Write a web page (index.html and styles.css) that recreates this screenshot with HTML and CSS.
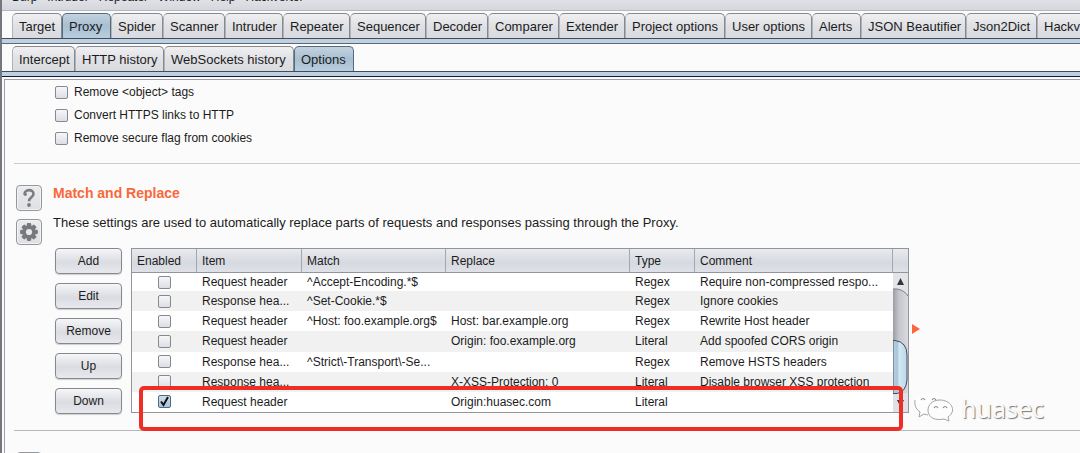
FILE: index.html
```html
<!DOCTYPE html>
<html lang="en">
<head>
<meta charset="utf-8">
<title>Proxy options</title>
<link rel="stylesheet" href="styles.css">
</head>
<body>
<div class="window">
  <nav class="menubar"><span>Burp</span><span>Intruder</span><span>Repeater</span><span>Window</span><span>Help</span><span>Hackvertor</span></nav>
  <div class="tabs tabs-main">
    <button class="tab">Target</button><button class="tab active">Proxy</button><button class="tab">Spider</button><button class="tab">Scanner</button><button class="tab">Intruder</button><button class="tab">Repeater</button><button class="tab">Sequencer</button><button class="tab">Decoder</button><button class="tab">Comparer</button><button class="tab">Extender</button><button class="tab">Project options</button><button class="tab">User options</button><button class="tab">Alerts</button><button class="tab">JSON Beautifier</button><button class="tab">Json2Dict</button><button class="tab">Hackvertor</button>
  </div>
  <div class="tabs tabs-sub">
    <button class="tab">Intercept</button><button class="tab">HTTP history</button><button class="tab">WebSockets history</button><button class="tab active">Options</button>
  </div>
  <main class="panel">
    <div class="checks">
      <label class="check"><input type="checkbox">Remove &lt;object&gt; tags</label>
      <label class="check"><input type="checkbox">Convert HTTPS links to HTTP</label>
      <label class="check"><input type="checkbox">Remove secure flag from cookies</label>
    </div>
    <section class="section">
      <div class="tools">
        <button class="tool" aria-label="Help"><svg width="18" height="20" viewBox="0 0 18 20"><path d="M4.5 6.5C4.5 0.8 13.5 0.8 13.5 6C13.5 9.2 9 9.4 9 13.2" fill="none" stroke="#7b7d80" stroke-width="2.6"/><circle cx="5.3" cy="6.3" r="1.6" fill="#7b7d80"/><circle cx="9" cy="17" r="1.9" fill="#7b7d80"/></svg></button>
        <button class="tool" aria-label="Settings"><svg width="20" height="20" viewBox="-9 -9 18 18"><g fill="#77797c"><rect x="-2" y="-8" width="4" height="16" rx="1"/><rect x="-2" y="-8" width="4" height="16" rx="1" transform="rotate(45)"/><rect x="-2" y="-8" width="4" height="16" rx="1" transform="rotate(90)"/><rect x="-2" y="-8" width="4" height="16" rx="1" transform="rotate(135)"/><circle r="6"/></g><circle r="2.8" fill="#e6e7e9"/></svg></button>
      </div>
      <div class="content">
        <h2>Match and Replace</h2>
        <p>These settings are used to automatically replace parts of requests and responses passing through the Proxy.</p>
        <div class="editor">
          <div class="actions">
            <button>Add</button><button>Edit</button><button>Remove</button><button>Up</button><button>Down</button>
          </div>
          <div class="rules">
            <table>
              <colgroup><col class="c-enabled"><col class="c-item"><col class="c-match"><col class="c-replace"><col class="c-type"><col class="c-comment"><col class="c-scroll"></colgroup>
              <thead><tr><th>Enabled</th><th>Item</th><th>Match</th><th>Replace</th><th>Type</th><th>Comment</th><th></th></tr></thead>
              <tbody>
                <tr><td><input type="checkbox" aria-label="Enabled"></td><td>Request header</td><td>^Accept-Encoding.*$</td><td></td><td>Regex</td><td>Require non-compressed respo...</td>
                  <td class="scroll" rowspan="7"><svg width="15" height="139" viewBox="0 0 15 139">
                    <defs>
                      <linearGradient id="track"><stop offset="0" stop-color="#9b9da3"/><stop offset=".4" stop-color="#c5c7cc"/><stop offset="1" stop-color="#d9dadf"/></linearGradient>
                      <linearGradient id="thumb"><stop offset="0" stop-color="#b8cfdf"/><stop offset=".3" stop-color="#a9c5d9"/><stop offset=".45" stop-color="#d3e7f3"/><stop offset="1" stop-color="#bdd7e8"/></linearGradient>
                    </defs>
                    <rect width="15" height="139" fill="url(#track)"/>
                    <path d="M0 0H15V23Q12 16 4 16H0Z" fill="#e3e4e8"/><path d="M0 16H4Q11 17 15 23" fill="none" stroke="#7e838b"/>
                    <path d="M7.5 5L11 12H4Z" fill="#33383f"/>
                    <path d="M0 120H15V139H0Z" fill="#e0e1e6"/>
                    <path d="M0 67.5H2Q14 69 14 82V107Q13 119 4 120.5H0Z" fill="url(#thumb)" stroke="#3d4f60"/>
                    <path d="M7.5 134L11 127H4Z" fill="#33383f"/>
                  </svg></td></tr>
                <tr><td><input type="checkbox" aria-label="Enabled"></td><td>Response hea...</td><td>^Set-Cookie.*$</td><td></td><td>Regex</td><td>Ignore cookies</td></tr>
                <tr><td><input type="checkbox" aria-label="Enabled"></td><td>Request header</td><td>^Host: foo.example.org$</td><td>Host: bar.example.org</td><td>Regex</td><td>Rewrite Host header</td></tr>
                <tr><td><input type="checkbox" aria-label="Enabled"></td><td>Request header</td><td></td><td>Origin: foo.example.org</td><td>Literal</td><td>Add spoofed CORS origin</td></tr>
                <tr><td><input type="checkbox" aria-label="Enabled"></td><td>Response hea...</td><td>^Strict\-Transport\-Se...</td><td></td><td>Regex</td><td>Remove HSTS headers</td></tr>
                <tr><td><input type="checkbox" aria-label="Enabled"></td><td>Response hea...</td><td></td><td>X-XSS-Protection: 0</td><td>Literal</td><td>Disable browser XSS protection</td></tr>
                <tr><td><input type="checkbox" aria-label="Enabled" checked></td><td>Request header</td><td></td><td>Origin:huasec.com</td><td>Literal</td><td></td></tr>
              </tbody>
            </table>
            <div class="highlight"></div>
          </div>
          <svg class="expander" width="8" height="10" viewBox="0 0 8 10"><path d="M0 0L8 5L0 10Z" fill="#f9683a"/></svg>
        </div>
      </div>
    </section>
    <section class="section next">
      <div class="tools"><button class="tool" aria-label="Help"></button></div>
    </section>
  </main>
</div>
<div class="watermark">
  <svg width="40" height="32" viewBox="0 0 40 32"><g fill="#fdfdfd" stroke="#a3a3a3"><path d="M15 1C6 1 1 6 1 12C1 16 3 18 6 20L5 25L10 22Q14 23 17 22C30 21 29 1 15 1Z" stroke="none"/><path d="M1 8C0 14 3 18 6 20L5 25L10 22L14 23" fill="none"/><path d="M26 8C18 8 14 13 14 18C14 25 20 29 30 27L35 29L34 25C44 18 36 8 26 8Z"/></g><g fill="none" stroke="#888" stroke-width="1.2"><path d="M7 8Q9 5 11 8M18 8Q20 5 22 8M20 16Q22 13 24 16M29 16Q31 13 33 16"/></g></svg>
  <span>huasec</span>
</div>
</body>
</html>
```
FILE: styles.css
```css
* { box-sizing: border-box; }
body {
  margin: 0;
  height: 100vh;
  overflow: hidden;
  position: relative;
  background: #fbfbfb;
  color: #1c1c1c;
  font: 12px/20px "Liberation Sans", Arial, sans-serif;
}
button, input { font: inherit; color: inherit; margin: 0; padding: 0; }
.window { height: 100%; border-left: 2px solid #74777d; overflow: hidden; }
.menubar {
  display: flex;
  gap: 10px;
  height: 11px;
  padding-left: 10px;
  align-items: flex-end;
  overflow: hidden;
  line-height: 18px;
  background: linear-gradient(#dfe1e6, #d5d7de);
  border-bottom: 1px solid #b4b7bf;
}
.menubar span { margin-bottom: 4px; }
.tabs {
  display: grid;
  padding-left: 10px;
  background: #fbfbfb;
}
.tabs-main {
  grid-template-columns: 50px 49px 52px 62px 58px 67px 76px 62px 71px 66px 100px 87px 49px 105px 71px 90px;
  padding-top: 2px;
  border-bottom: 1px solid #5a6880;
}
.tabs-sub {
  grid-template-columns: 63px 89px 130px 60px;
  padding-top: 2px;
  border-bottom: 1px solid #101d33;
}
.tabs::after {
  content: "";
  grid-column: 1 / -1;
  height: 4px;
  margin: 0 -1000px 0 -10px;
  background: #c1d0de;
  border-top: 1px solid #3f4e5c;
}
.tab {
  height: 25px;
  padding: 1px 0 0 6px;
  font-size: 13px;
  line-height: 24px;
  text-align: left;
  white-space: nowrap;
  border: 1px solid #85898f;
  border-bottom: 0;
  border-left-color: #b0b3b8;
  border-radius: 5px 5px 0 0;
  background: linear-gradient(#f0f0f2, #e0e1e5 50%, #dadbe0);
}
.tab.active {
  background: linear-gradient(#c3d2df, #a8bfd2 50%, #b9cddd);
  border-color: #56697d;
}
.panel {
  margin: 2px 0 0 2px;
  border: 1px solid #9c9ea8;
  border-right: 0;
  padding: 2px 0 0 9px;
}
.checks {
  display: flex;
  flex-direction: column;
  gap: 3px;
  padding: 0 0 15px 41px;
  border-bottom: 1px solid #cbcccd;
}
.check { display: flex; align-items: center; gap: 6px; }
input[type="checkbox"] {
  appearance: none;
  width: 13px;
  height: 13px;
  border: 1px solid #868990;
  border-radius: 2px;
  background: linear-gradient(#f7f7f9, #dcdee4);
}
input[type="checkbox"]:checked {
  border-color: #4f6a85;
  background: url("data:image/svg+xml,%3Csvg xmlns='http://www.w3.org/2000/svg' viewBox='0 0 11 11'%3E%3Cpath d='M2 5.5L4.5 9L9 1' fill='none' stroke='%23111' stroke-width='2'/%3E%3C/svg%3E"), linear-gradient(#d0deea, #a9c2d8);
}
.section {
  display: flex;
  gap: 11px;
  padding: 19px 0 16px 2px;
  border-bottom: 1px solid #b6b7b9;
}
.tools { display: flex; flex-direction: column; gap: 8px; padding-top: 2px; }
.tool {
  width: 26px;
  height: 26px;
  display: grid;
  place-items: center;
  border: 1px solid #94979c;
  border-radius: 4px;
  background: linear-gradient(#ebecee, #dfe0e3);
  box-shadow: inset 0 0 0 1px #f3f3f4;
}
.content { flex: 1; min-width: 0; }
h2 { margin: 0; font-size: 14px; line-height: 20px; color: #f9683a; }
p { margin: 10px 0; font-size: 13px; line-height: 20px; }
.editor { display: flex; padding: 5px 0 0 2px; }
.actions { display: flex; flex-direction: column; gap: 9px; margin-right: 9px; }
.actions button {
  width: 67px;
  height: 26px;
  border: 1px solid #85898f;
  border-radius: 4px;
  background: linear-gradient(#f6f6f8, #dadce2 55%, #e8e9ed);
  box-shadow: 0 1px 1px #d0d0d0;
}
.rules { position: relative; align-self: flex-start; }
table {
  width: 778px;
  table-layout: fixed;
  border-collapse: separate;
  border-spacing: 0;
  border: 1px solid #92959c;
  background: #fff;
}
.c-enabled { width: 65px; }
.c-item { width: 105px; }
.c-match { width: 144px; }
.c-replace { width: 184px; }
.c-type { width: 65px; }
.c-comment { width: 198px; }
.c-scroll { width: 15px; }
th, td { padding: 0 0 0 5px; text-align: left; white-space: nowrap; overflow: hidden; }
th {
  height: 24px;
  font-weight: normal;
  background: linear-gradient(#e9eaee, #d6d9e0 60%, #dfe1e7);
  border-right: 1px solid #a3a7ae;
  border-bottom: 1px solid #92959c;
}
th:last-child { border-right: 0; }
td { height: 20px; line-height: 20px; }
tbody tr:first-child td { height: 18px; line-height: 18px; }
tbody tr:nth-child(even) td { background: #f1f1f1; }
td:first-child { padding: 0; text-align: center; }
td input { display: block; margin: 0 auto; }
tbody td.scroll { padding: 0; }
.scroll svg { display: block; }
.highlight {
  position: absolute;
  left: 8px;
  top: 138px;
  right: 6px;
  height: 45px;
  border: 4px solid #ee2d24;
  border-radius: 5px;
}
.expander { margin: 76px 0 0 3px; }
.next { padding-top: 19px; }
.watermark {
  position: absolute;
  right: 36px;
  bottom: 28px;
  display: flex;
  align-items: center;
  gap: 7px;
  color: #fafafa;
  font: 25px/34px "Noto Sans", sans-serif;
  text-shadow: 1px 1px 1px #777;
}
```
